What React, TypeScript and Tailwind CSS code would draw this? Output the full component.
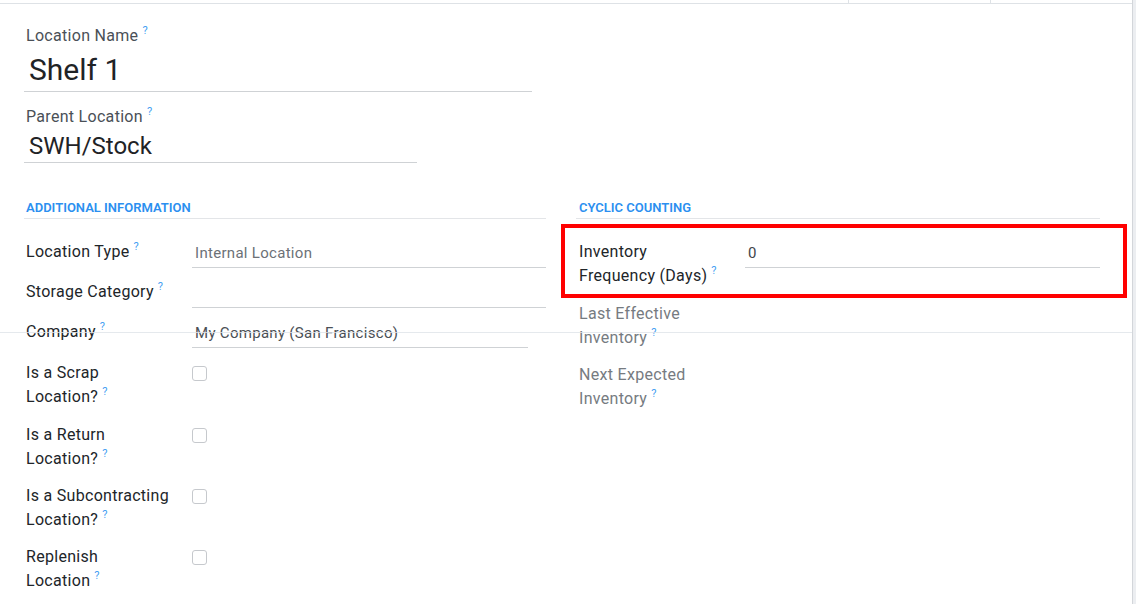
import React from "react";

const Q = () => (
  <span className="relative -top-[7px] ml-[4px] text-[11px] leading-none tracking-normal text-[#45a0f2]">?</span>
);

function Row({
  label,
  value,
  valueWidth,
  valueClass = "text-[#4a4f55]",
  mb = "mb-[12px]",
}: {
  label: string;
  value?: string;
  valueWidth?: string;
  valueClass?: string;
  mb?: string;
}) {
  return (
    <div className={`flex ${mb}`}>
      <div className="w-[168px] shrink-0 pl-[2px] text-[16px] leading-[24px] text-[#212529]">
        {label}
        <Q />
      </div>
      <div className={`h-[28px] border-b border-[#cfd2d5] ${valueWidth ?? "flex-1"}`}>
        <div className={`pl-[3px] pt-[1px] text-[15px] leading-[24px] ${valueClass}`}>{value}</div>
      </div>
    </div>
  );
}

function CheckRow({ l1, l2, mb = "mb-[13px]" }: { l1: string; l2: string; mb?: string }) {
  return (
    <div className={`flex ${mb}`}>
      <div className="w-[168px] shrink-0 pl-[2px] text-[16px] leading-[24px] text-[#212529]">
        <div>{l1}</div>
        <div>
          {l2}
          <Q />
        </div>
      </div>
      <div className="pt-[5px]">
        <div className="h-[15px] w-[15px] rounded-[3px] border border-[#c6c9cd] bg-white" />
      </div>
    </div>
  );
}

export default function App() {
  return (
    <div className="relative flex h-[604px] w-[1136px] overflow-clip bg-white font-['Roboto',sans-serif] tracking-[0.3px]">
      <div className="flex flex-1 flex-col">
        <div className="relative h-[3px] shrink-0">
          <div className="absolute left-[848px] top-0 h-[3px] w-px bg-[#dee2e6]" />
          <div className="absolute left-[990px] top-0 h-[3px] w-px bg-[#dee2e6]" />
        </div>
        <div className="flex-1 border-t border-[#dee2e6] pl-[24px] pr-[32px] pt-[20px]">
          <div className="h-[24px] pl-[2px] text-[16px] leading-[24px] text-[#4a5057]">
            Location Name
            <Q />
          </div>
          <div className="box-border h-[44px] w-[508px] border-b border-[#cfd2d5] pl-[5px] pt-[4px] text-[30px] leading-[35px] tracking-normal text-[#1f2326]">
            Shelf 1
          </div>
          <div className="mt-[13px] h-[24px] pl-[2px] text-[16px] leading-[24px] text-[#4a5057]">
            Parent Location
            <Q />
          </div>
          <div className="box-border h-[34px] w-[393px] border-b border-[#cfd2d5] pl-[5px] pt-[3px] text-[24px] leading-[28px] tracking-normal text-[#1f2326]">
            SWH/Stock
          </div>

          <div className="mt-[34px] grid grid-cols-[522px_524px] gap-x-[30px]">
            <div>
              <div className="h-[22px] border-b border-[#e3e5e8] pl-[2px] pt-[1px] text-[13px] font-semibold leading-[20px] tracking-normal text-[#2b8ff0]">
                ADDITIONAL INFORMATION
              </div>
              <div className="mt-[21px]">
                <Row label="Location Type" value="Internal Location" valueClass="text-[#6c7177]" />
                <Row label="Storage Category" value="" />
                <Row label="Company" value="My Company (San Francisco)" valueWidth="w-[336px]" mb="mb-[13px]" />
                <CheckRow l1="Is a Scrap" l2="Location?" mb="mb-[14px]" />
                <CheckRow l1="Is a Return" l2="Location?" />
                <CheckRow l1="Is a Subcontracting" l2="Location?" />
                <CheckRow l1="Replenish" l2="Location" mb="mb-0" />
              </div>
            </div>
            <div>
              <div className="h-[22px] border-b border-[#e3e5e8] pl-[3px] pt-[1px] text-[13px] font-semibold leading-[20px] tracking-normal text-[#2b8ff0]">
                CYCLIC COUNTING
              </div>
              <div className="mt-[21px] pl-[3px]">
                <div className="mb-[14px] flex">
                  <div className="w-[166px] shrink-0 text-[16px] leading-[24px] text-[#212529]">
                    <div>Inventory</div>
                    <div>
                      Frequency (Days)
                      <Q />
                    </div>
                  </div>
                  <div className="h-[28px] flex-1 border-b border-[#cfd2d5]">
                    <div className="pl-[3px] pt-[1px] text-[15px] leading-[24px] text-[#3f454b]">0</div>
                  </div>
                </div>
                <div className="mb-[13px] text-[16px] leading-[24px] text-[#767b81]">
                  <div>Last Effective</div>
                  <div>
                    Inventory
                    <Q />
                  </div>
                </div>
                <div className="text-[16px] leading-[24px] text-[#767b81]">
                  <div>Next Expected</div>
                  <div>
                    Inventory
                    <Q />
                  </div>
                </div>
              </div>
            </div>
          </div>
        </div>
      </div>
      <div className="w-[4px] border-l border-[#d3d6da] bg-[#eceef1]" />

      <div className="absolute left-0 top-[332px] z-10 h-px w-[1132px] bg-[#dfe3e8]/80" />
      <div className="absolute left-[561px] top-[224px] z-10 h-[74px] w-[566px] border-4 border-[#ff0000]" />
    </div>
  );
}
